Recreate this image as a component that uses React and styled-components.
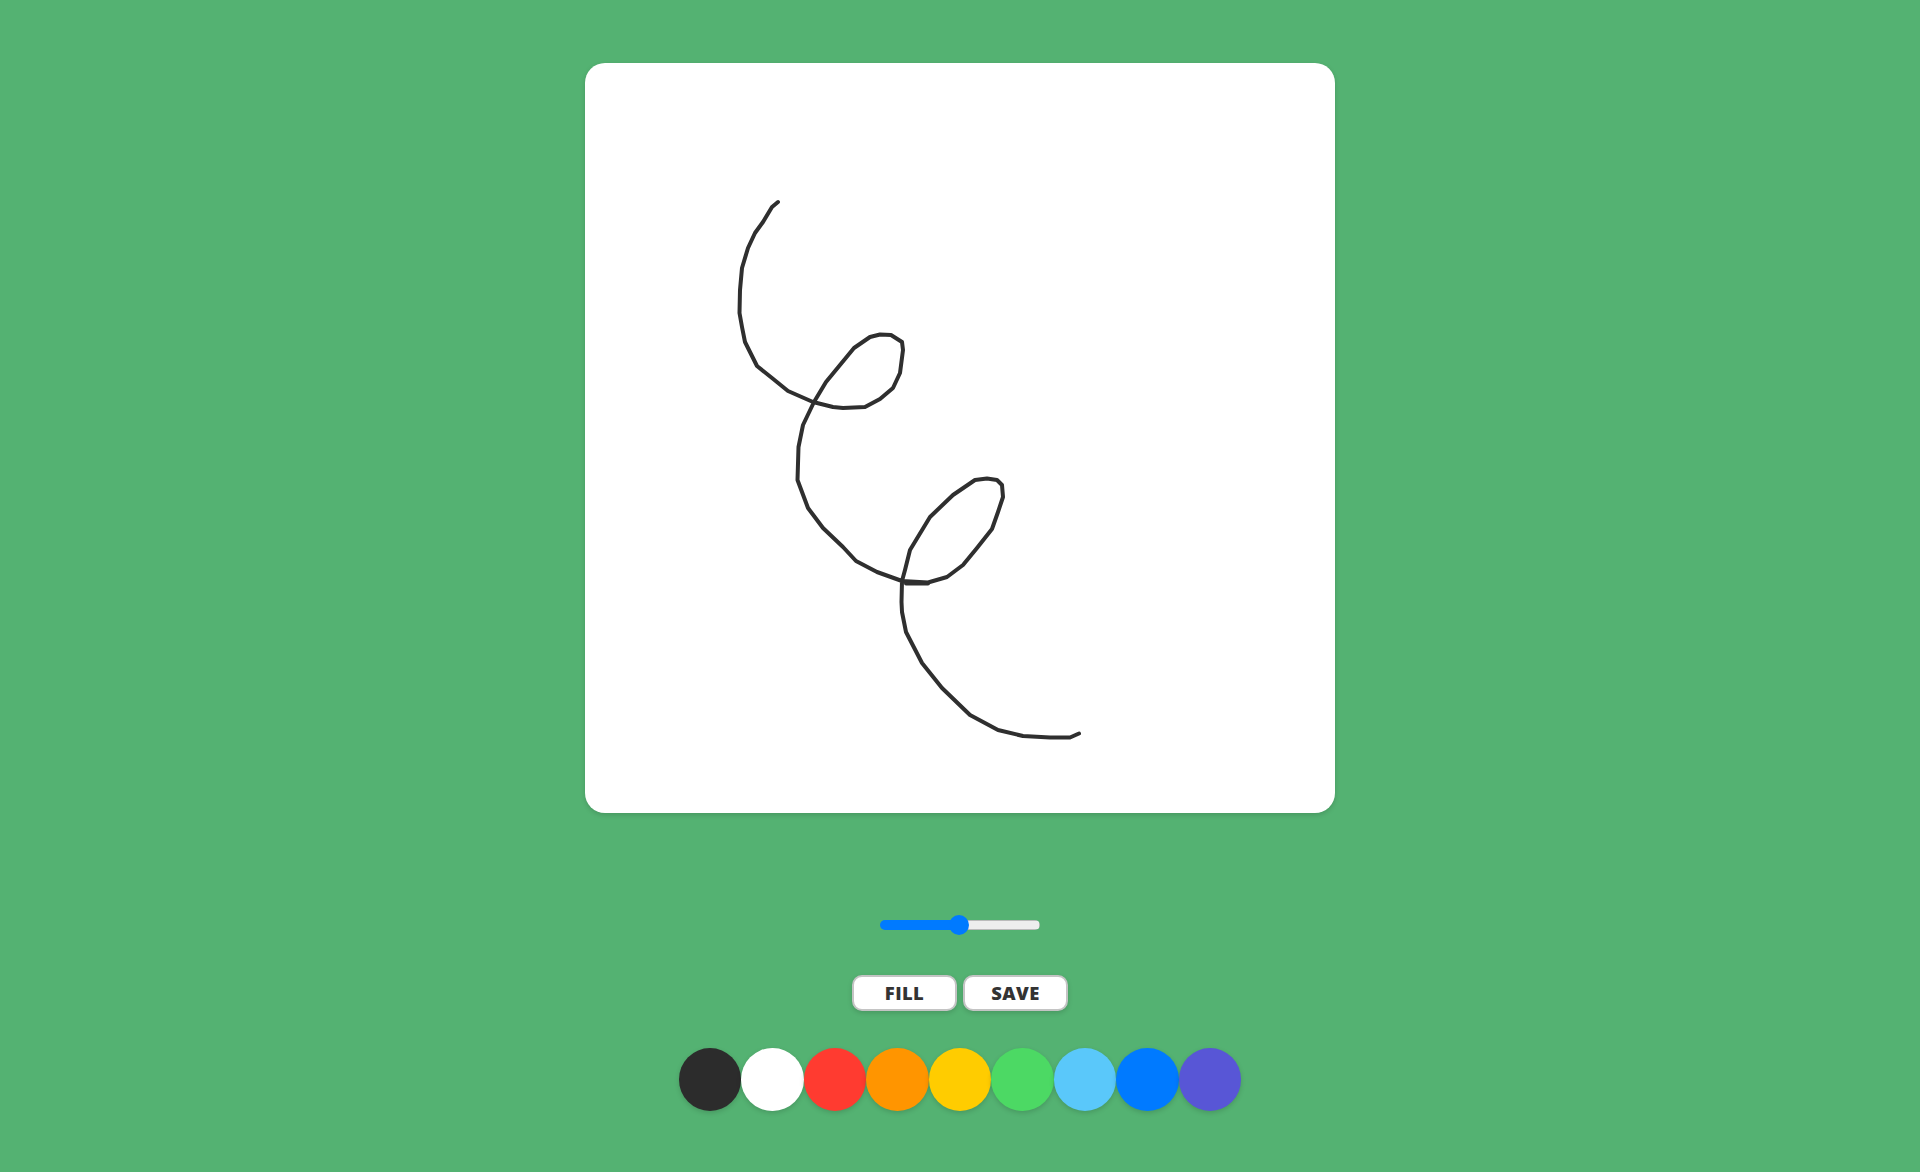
import React, { useState } from 'react';
import styled, { createGlobalStyle } from 'styled-components';

const colors = ['#2c2c2c', '#ffffff', '#ff3b30', '#ff9500', '#ffcc00', '#4cd964', '#5ac8fa', '#007aff', '#5856d6'];

// stroke points, page coordinates (viewBox of the sketch starts at the card corner)
const stroke = [
  [778, 202], [772, 207], [763, 222], [755, 233], [748, 248], [742, 268], [740, 290], [739.5, 313],
  [742, 327], [745, 342], [757, 366], [772, 378], [788, 391], [813, 402], [833, 407], [843, 408],
  [865, 407], [880, 399], [893, 388], [900, 373], [903, 350], [902, 342], [891, 335], [880, 334.5],
  [870, 337], [854, 348], [840, 365], [826, 382], [814, 402], [803, 425], [798.5, 447], [797.5, 480],
  [808, 508], [823, 528], [843, 547], [856, 561], [877, 572], [902, 581], [928, 582.5], [947, 577],
  [963, 565], [977, 548], [992, 529], [998, 512], [1003, 497], [1002, 485], [997, 480], [987, 478.5],
  [975, 480], [953, 495], [930, 517], [910, 550], [905, 570], [902, 581],
  [901.5, 602], [902, 612], [906, 632], [922, 663], [942, 688], [970, 715], [998, 730], [1023, 736],
  [1050, 737.5], [1070, 737.5], [1079, 733.5],
];

const GlobalStyle = createGlobalStyle`
  html, body {
    margin: 0;
    padding: 0;
    background-color: #54b272;
    font-family: "Open Sans", "Liberation Sans", sans-serif;
  }
`;

const Page = styled.main`
  display: flex;
  flex-direction: column;
  align-items: center;
  height: 1172px;
  padding-top: 63px;
  box-sizing: border-box;
  overflow: hidden;
`;

const Board = styled.div`
  width: 750px;
  height: 750px;
  flex-shrink: 0;
  background-color: #ffffff;
  border-radius: 20px;
  box-shadow: 0 2px 5px rgba(0, 0, 0, 0.15);
  overflow: hidden;
`;

const Sketch = styled.svg`
  display: block;
  width: 750px;
  height: 750px;
`;

const BrushSlider = styled.input`
  appearance: none;
  display: block;
  width: 160px;
  height: 10px;
  margin: 107px 0 0;
  padding: 0;
  border: none;
  border-radius: 5px;
  outline: none;
  background:
    linear-gradient(to right, #007aff 50%, transparent 50%),
    linear-gradient(#eeeeee, #eeeeee) center / calc(100% - 2px) calc(100% - 2px) no-repeat,
    #bbbbbb;

  &::-webkit-slider-thumb {
    appearance: none;
    width: 20px;
    height: 20px;
    margin-left: -1px;
    border-radius: 50%;
    background-color: #007aff;
    cursor: pointer;
  }
`;

const Actions = styled.div`
  display: flex;
  gap: 6px;
  margin-top: 45px;
`;

const ActionButton = styled.button`
  width: 105px;
  height: 36px;
  padding: 0;
  background-color: #ffffff;
  border: 2px solid #c4c4c4;
  border-radius: 10px;
  box-shadow: 0 2px 5px rgba(0, 0, 0, 0.15);
  color: #333333;
  font-family: "Open Sans", "Liberation Sans", sans-serif;
  font-size: 18.4px;
  font-weight: 800;
  letter-spacing: 0.4px;
  line-height: 1;
  cursor: pointer;
`;

const Palette = styled.div`
  display: flex;
  margin-top: 37px;
`;

const Swatch = styled.button`
  width: 62.5px;
  height: 63px;
  padding: 0;
  border: none;
  border-radius: 50%;
  background-color: ${(props) => props.$color};
  box-shadow: 0 2px 5px rgba(0, 0, 0, 0.15);
  cursor: pointer;
`;

const App = () => {
  const [size, setSize] = useState(50);

  return (
    <Page>
      <GlobalStyle />
      <Board>
        <Sketch viewBox="585 63 750 750" fill="none" stroke="#2f2f2f" strokeWidth="4" strokeLinecap="round" strokeLinejoin="round">
          <polyline points={stroke.map((p) => p.join(',')).join(' ')} />
          <path d="M906 583.5 L928 583.5" />
        </Sketch>
      </Board>
      <BrushSlider
        type="range"
        min="0"
        max="100"
        value={size}
        onChange={(e) => setSize(e.target.value)}
      />
      <Actions>
        <ActionButton>FILL</ActionButton>
        <ActionButton>SAVE</ActionButton>
      </Actions>
      <Palette>
        {colors.map((color) => (
          <Swatch key={color} $color={color} />
        ))}
      </Palette>
    </Page>
  );
};

export default App;
